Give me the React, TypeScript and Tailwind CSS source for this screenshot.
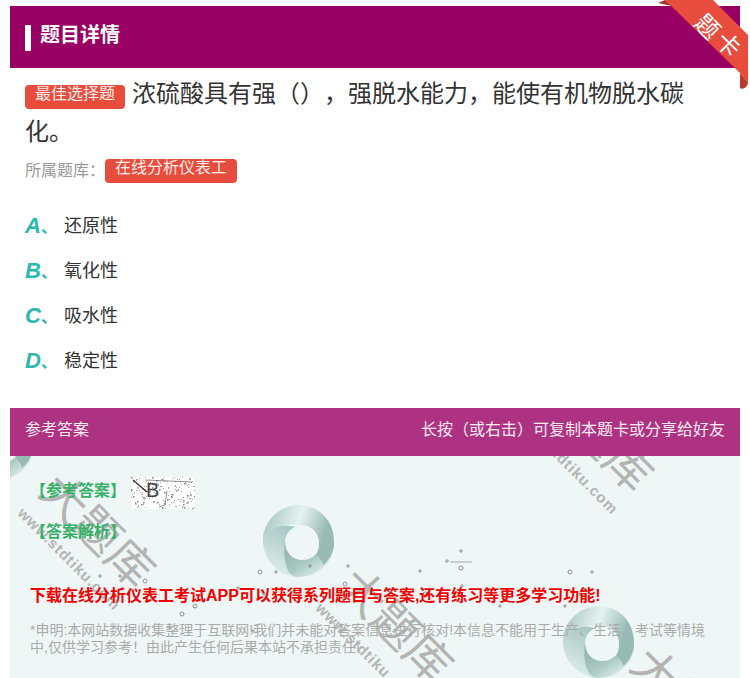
import React from 'react';

const font = { fontFamily: '"Liberation Sans", "Noto Sans CJK SC", sans-serif' };

const options = [
  { key: 'A', text: '还原性' },
  { key: 'B', text: '氧化性' },
  { key: 'C', text: '吸水性' },
  { key: 'D', text: '稳定性' },
];

// little dots scattered over the answer panel
const specks = [
  [250, 116], [266, 116], [254, 138], [300, 138], [300, 110], [338, 110], [335, 128], [410, 115], [437, 105], [451, 112],
  [452, 130], [451, 95], [560, 116], [582, 116], [570, 138], [415, 138], [490, 150], [228, 132], [135, 125], [90, 120],
  [60, 135], [185, 150], [243, 175], [110, 120], [172, 158], [555, 150],
];

const Swirl: React.FC<{ className: string; id: string }> = ({ className, id }) => (
  <svg viewBox="0 0 74 72" className={className}>
    <defs>
      <linearGradient id={`${id}-a`} x1="0" y1="0.3" x2="1" y2="0.6">
        <stop offset="0" stopColor="#a9c8c3" />
        <stop offset="0.45" stopColor="#e6f3f0" />
        <stop offset="0.85" stopColor="#98bab4" />
      </linearGradient>
      <linearGradient id={`${id}-b`} x1="0.1" y1="0" x2="0.9" y2="0.9">
        <stop offset="0" stopColor="#8fb3ad" />
        <stop offset="0.55" stopColor="#a9c8c2" />
        <stop offset="1" stopColor="#eaf7f4" />
      </linearGradient>
      <linearGradient id={`${id}-c`} x1="0.6" y1="0" x2="0.3" y2="1">
        <stop offset="0" stopColor="#a8c8c3" />
        <stop offset="1" stopColor="#e2f0ed" />
      </linearGradient>
    </defs>
    <path d="M2 32C1 52 14 70 36 72C30 66 24 52 24 38C24 30 28 25 34 22C20 18 8 22 2 32z" fill={`url(#${id}-c)`} />
    <path d="M24 36C24 48 32 55 41 55C50 55 56 50 58 44L73 36C74 56 58 72 37 72C28 72 21 60 24 36z" fill={`url(#${id}-b)`} />
    <path d="M2 32C4 14 20 0 38 0C58 0 73 16 73 36C73 46 69 54 62 60C62 56 58 52 55 50C57 47 58 43 58 38C58 28 51 20 40 20C26 18 10 22 2 32z" fill={`url(#${id}-a)`} />
  </svg>
);

const Watermark: React.FC<{ className: string }> = ({ className }) => (
  <div className={`absolute w-[160px] h-[70px] rotate-45 flex flex-col items-center pointer-events-none text-[#b4b4b4] ${className}`}>
    <span className="text-[46px] leading-[44px] whitespace-nowrap">大题库</span>
    <span className="text-[15px] leading-[20px] mt-2 font-bold tracking-[1px] whitespace-nowrap">www.stdtiku.com</span>
  </div>
);

// scanned answer stamp, the noise is drawn
const AnswerStamp: React.FC = () => {
  const dots = Array.from({ length: 170 }, (_, i) => ({
    x: (i * 37 + (i * i) % 23) % 64,
    y: (i * 53 + (i * i) % 17) % 32,
    s: i % 5 === 0 ? 1.6 : 0.9,
  }));
  return (
    <div className="relative w-16 h-8 bg-white shrink-0">
      <svg viewBox="0 0 64 32" className="absolute inset-0 w-full h-full">
        {dots.map((d, i) => (
          <rect key={i} x={d.x} y={d.y} width={d.s} height={d.s} fill="#555" opacity={0.65} />
        ))}
        <path d="M2 3L16 15" stroke="#333" strokeWidth="1.4" />
        <path d="M14 3L62 5M36 14L34 28L28 30" stroke="#666" strokeWidth="0.7" fill="none" />
      </svg>
      <span className="absolute left-[15px] top-[1px] text-xl leading-6 font-normal text-[#444]">B</span>
    </div>
  );
};

export default function App() {
  return (
    <div className="w-[750px] h-[678px] overflow-hidden bg-white relative pt-1.5" style={font}>
      <div className="mx-2.5 w-[730px]">
        {/* Title bar */}
        <div className="h-[62px] bg-[#990063] flex items-center pl-[15px] gap-[9px]">
          <span className="w-1.5 h-[26px] bg-white mt-[1px]" />
          <h1 className="text-xl font-bold text-white leading-none -mt-1">题目详情</h1>
        </div>

        {/* Question */}
        <div className="px-[15px] pt-[7px]">
          <p className="text-2xl leading-[38px] text-[#333] w-[680px] [text-spacing-trim:space-all]">
            <span className="inline-block align-[3px] bg-[#e74c3c] text-white/90 text-base leading-[17px] h-6 w-[100px] text-center rounded-[4px] mr-[7px]">最佳选择题</span>
            浓硫酸具有强（），强脱水能力，能使有机物脱水碳化。
          </p>
          <div className="flex items-center mt-2 h-6 text-base text-[#999] [text-spacing-trim:space-all]">
            <span>所属题库：</span>
            <span className="bg-[#e74c3c] text-white/90 leading-[18px] h-6 w-[132px] text-center rounded-[4px]">在线分析仪表工</span>
          </div>
          <ul className="mt-5 flex flex-col">
            {options.map(o => (
              <li key={o.key} className="h-[45px] flex items-center">
                <span className="w-[39px] text-[22px] leading-7 font-bold italic text-[#2ab8b0]">{o.key}<span className="not-italic text-base">、</span></span>
                <span className="text-lg text-[#333]">{o.text}</span>
              </li>
            ))}
          </ul>
        </div>

        {/* Answer header */}
        <div className="mt-[25px] h-12 bg-[#ae3282] flex items-center justify-between px-[15px] pb-1 text-base text-white/90 [text-spacing-trim:space-all]">
          <span>参考答案</span>
          <span>长按（或右击）可复制本题卡或分享给好友</span>
        </div>

        {/* Answer body */}
        <div className="relative h-[222px] bg-[#eef7f6] overflow-hidden px-5">
          <Swirl id="s1" className="absolute left-[251px] top-[49px] w-[74px] h-[72px]" />
          <Swirl id="s2" className="absolute left-[551px] top-[150px] w-[74px] h-[72px]" />
          <Swirl id="s3" className="absolute -left-[50px] -top-[48px] w-[74px] h-[72px]" />
          <Watermark className="-left-0.5 top-[49px]" />
          <Watermark className="left-[296px] top-[144px]" />
          <Watermark className="left-[496px] top-[-47px]" />
          <Watermark className="left-[589px] top-[223px]" />
          <svg viewBox="0 0 730 222" className="absolute inset-0 w-full h-full">
            {specks.map(([x, y], i) => (
              <circle key={i} cx={x} cy={y} r={i % 3 === 0 ? 2 : 1.2} fill="none" stroke="#777" strokeWidth="0.8" />
            ))}
            <path d="M440 106H462" stroke="#888" strokeWidth="0.7" />
          </svg>
          <div className="relative pt-[21px]">
            <div className="flex items-center h-8 text-base font-bold text-[#37b06a]">
              <span className="w-[101px] -mt-1">【参考答案】</span>
              <AnswerStamp />
            </div>
            <div className="text-base font-bold text-[#37b06a] mt-[11px] leading-6">【答案解析】</div>
            <p className="text-base font-bold text-[#f00000] mt-10 leading-6 whitespace-nowrap">下载在线分析仪表工考试APP可以获得系列题目与答案,还有练习等更多学习功能!</p>
            <p className="text-sm text-[#aaa] leading-[17px] mt-[14px] w-[690px]">*申明:本网站数据收集整理于互联网!我们并未能对答案信息进行核对!本信息不能用于生产、生活、考试等情境中,仅供学习参考！由此产生任何后果本站不承担责任!</p>
          </div>
        </div>
      </div>

      {/* Corner ribbon */}
      <div className="absolute top-0 right-0 w-[100px] h-[95px] overflow-hidden pointer-events-none">
        <svg viewBox="0 0 100 95" className="absolute inset-0 w-full h-full">
          <path d="M8 3L15 0L22 6z" fill="#a8352a" />
          <path d="M90 73L98 82C98 87 93 90 90 88z" fill="#b93a2e" />
          <path d="M15 0L63 0L98 35L98 82L90 73z" fill="#e74c3c" />
        </svg>
        <span className="absolute left-[45px] top-[15px] w-6 text-white text-2xl rotate-45 leading-6">题</span>
        <span className="absolute left-[66px] top-[33px] w-6 text-white text-2xl rotate-45 leading-6">卡</span>
      </div>
    </div>
  );
}
